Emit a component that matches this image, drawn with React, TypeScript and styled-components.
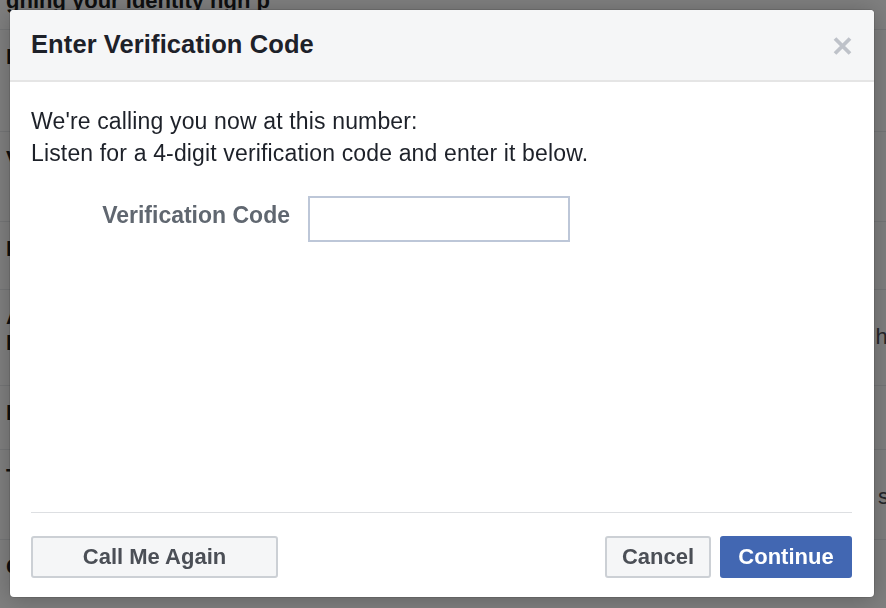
import React from "react";
import styled, { createGlobalStyle } from "styled-components";

const GlobalStyle = createGlobalStyle`
  html, body {
    margin: 0;
    padding: 0;
    width: 886px;
    height: 608px;
    overflow: hidden;
    background: #fff;
  }

  body {
    font-family: "Liberation Sans", Arial, sans-serif;
    color: #1c1e21;
  }
`;

/* page behind the modal */

const Page = styled.div`
  width: 886px;
  height: 608px;
  overflow: hidden;
  display: flex;
  flex-direction: column;
  margin-top: -26px;
`;

const PageRow = styled.div<{ $height: number }>`
  height: ${(p) => p.$height}px;
  flex-shrink: 0;
  display: flex;
  justify-content: space-between;
  padding: 14px 0 0 6px;
  box-sizing: border-box;
  border-bottom: 1px solid #e9ebee;
  font-size: 22px;
  line-height: 26px;
  white-space: nowrap;
`;

const RowLabel = styled.div`
  font-weight: bold;
`;

const RowValue = styled.div<{ $offset: number }>`
  color: #4b4f56;
  margin-top: ${(p) => p.$offset}px;
  margin-right: -14px;
`;

/* modal */

const Overlay = styled.div`
  position: fixed;
  inset: 0;
  background: rgba(0, 0, 0, 0.5);
  display: flex;
  padding: 10px 12px 11px 10px;
  box-sizing: border-box;
`;

const Dialog = styled.div`
  flex: 1;
  display: flex;
  flex-direction: column;
  background: #fff;
  border-radius: 4px;
  overflow: hidden;
  box-shadow: 0 2px 24px rgba(0, 0, 0, 0.25), 0 0 0 1px rgba(0, 0, 0, 0.1);
`;

const Header = styled.div`
  height: 72px;
  box-sizing: border-box;
  display: flex;
  align-items: center;
  justify-content: space-between;
  padding: 0 22px 0 21px;
  background: #f5f6f7;
  border-bottom: 2px solid #e5e5e5;
`;

const Title = styled.h1`
  margin: 0 0 1px;
  font-size: 25.5px;
  letter-spacing: 0.1px;
  font-weight: bold;
  color: #1d2129;
`;

const CloseButton = styled.button`
  border: 0;
  padding: 0;
  margin-top: 2px;
  background: none;
  width: 20px;
  height: 20px;
  display: flex;
  align-items: center;
  justify-content: center;
  cursor: pointer;
`;

const Body = styled.div`
  flex: 1;
  padding: 23px 21px 0;
`;

const Message = styled.p`
  margin: 0;
  font-size: 23px;
  letter-spacing: 0.15px;
  line-height: 32px;
  color: #1d2129;
`;

const FieldRow = styled.div`
  display: flex;
  align-items: flex-start;
  margin-top: 27px;
`;

const FieldLabel = styled.label`
  width: 259px;
  flex-shrink: 0;
  text-align: right;
  margin-right: 18px;
  padding-top: 6px;
  font-size: 23px;
  font-weight: bold;
  color: #606770;
`;

const CodeInput = styled.input`
  width: 262px;
  height: 46px;
  box-sizing: border-box;
  border: 2px solid #bdc7d8;
  border-radius: 0;
  padding: 0 8px;
  font-family: inherit;
  font-size: 22px;
  outline: none;
`;

const Footer = styled.div`
  margin: 0 22px 0 21px;
  padding: 23px 0 19px;
  border-top: 1px solid #dddfe2;
  display: flex;
  align-items: center;
  justify-content: space-between;
`;

const ButtonGroup = styled.div`
  display: flex;
  gap: 9px;
`;

const Button = styled.button<{ $primary?: boolean; $width: number }>`
  width: ${(p) => p.$width}px;
  height: 42px;
  box-sizing: border-box;
  border-radius: 3px;
  border: 2px solid ${(p) => (p.$primary ? "#4267b2" : "#ccd0d5")};
  background: ${(p) => (p.$primary ? "#4267b2" : "#f5f6f7")};
  color: ${(p) => (p.$primary ? "#fff" : "#4b4f56")};
  font-family: "Liberation Sans", Arial, sans-serif;
  font-size: 22px;
  font-weight: bold;
  padding: 0;
  cursor: pointer;
`;

const pageRows = [
  { height: 56, label: "gning your identity ngh p", value: "", offset: 0 },
  { height: 102, label: "Name", value: "", offset: 0 },
  { height: 90, label: "Verified", value: "", offset: 0 },
  { height: 68, label: "Identity", value: "", offset: 0 },
  { height: 96, label: "Account\nInfo", value: "hh", offset: 20 },
  { height: 64, label: "Login", value: "", offset: 0 },
  { height: 90, label: "Two-Factor", value: "s l", offset: 20 },
  { height: 70, label: "Code", value: "", offset: 0 },
];

export default function App() {
  return (
    <>
      <GlobalStyle />
      <Page>
        {pageRows.map((row, i) => (
          <PageRow key={i} $height={row.height}>
            <RowLabel>
              {row.label.split("\n").map((line) => (
                <div key={line}>{line}</div>
              ))}
            </RowLabel>
            <RowValue $offset={row.offset}>{row.value}</RowValue>
          </PageRow>
        ))}
      </Page>

      <Overlay>
        <Dialog role="dialog" aria-label="Enter Verification Code">
          <Header>
            <Title>Enter Verification Code</Title>
            <CloseButton aria-label="Close">
              <svg width="19" height="18" viewBox="0 0 19 18">
                <path
                  d="M2 1.5 L17 16.5 M17 1.5 L2 16.5"
                  stroke="#bec2c9"
                  strokeWidth="3.8"
                  strokeLinecap="butt"
                />
              </svg>
            </CloseButton>
          </Header>

          <Body>
            <Message>We're calling you now at this number:</Message>
            <Message>
              Listen for a 4-digit verification code and enter it below.
            </Message>
            <FieldRow>
              <FieldLabel htmlFor="code">Verification Code</FieldLabel>
              <CodeInput id="code" type="text" />
            </FieldRow>
          </Body>

          <Footer>
            <Button $width={247}>Call Me Again</Button>
            <ButtonGroup>
              <Button $width={106}>Cancel</Button>
              <Button $primary $width={132}>
                Continue
              </Button>
            </ButtonGroup>
          </Footer>
        </Dialog>
      </Overlay>
    </>
  );
}
